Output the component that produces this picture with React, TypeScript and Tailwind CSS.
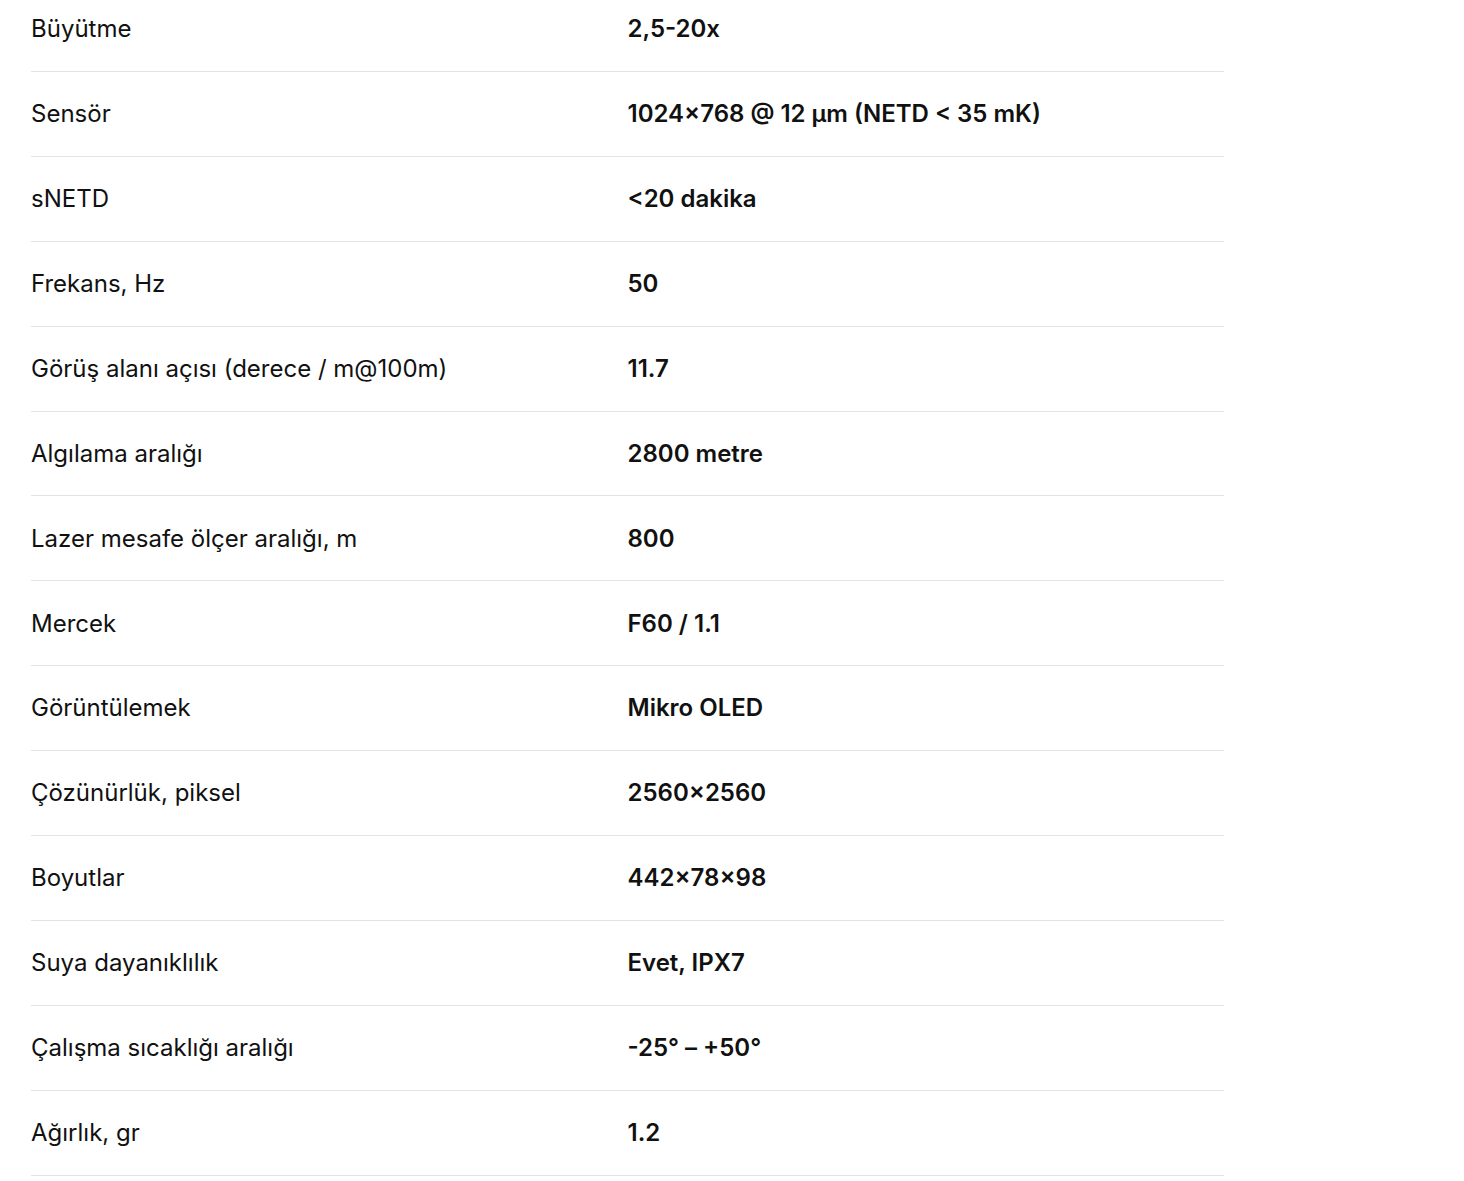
import React from 'react'

const specs: { label: string; value: string }[] = [
  { label: 'Büyütme', value: '2,5-20x' },
  { label: 'Sensör', value: '1024×768 @ 12 µm (NETD < 35 mK)' },
  { label: 'sNETD', value: '<20 dakika' },
  { label: 'Frekans, Hz', value: '50' },
  { label: 'Görüş alanı açısı (derece / m@100m)', value: '11.7' },
  { label: 'Algılama aralığı', value: '2800 metre' },
  { label: 'Lazer mesafe ölçer aralığı, m', value: '800' },
  { label: 'Mercek', value: 'F60 / 1.1' },
  { label: 'Görüntülemek', value: 'Mikro OLED' },
  { label: 'Çözünürlük, piksel', value: '2560×2560' },
  { label: 'Boyutlar', value: '442×78×98' },
  { label: 'Suya dayanıklılık', value: 'Evet, IPX7' },
  { label: 'Çalışma sıcaklığı aralığı', value: '-25° – +50°' },
  { label: 'Ağırlık, gr', value: '1.2' },
]

const App = () => {
  return (
    <div className="min-h-screen bg-white overflow-hidden" style={{ fontFamily: 'Inter, "Noto Sans", sans-serif' }}>
      <div className="ml-[31px] w-[1193px] -mt-[13px]">
        {specs.map((s, i) => (
          <div key={i} className="grid grid-cols-2 h-[84.92px] items-center border-b border-[#e2e2e8] text-[24px] leading-[1.4] text-[#111111]">
            <div className="font-normal">{s.label}</div>
            <div className="font-semibold">{s.value}</div>
          </div>
        ))}
      </div>
    </div>
  )
}

export default App
